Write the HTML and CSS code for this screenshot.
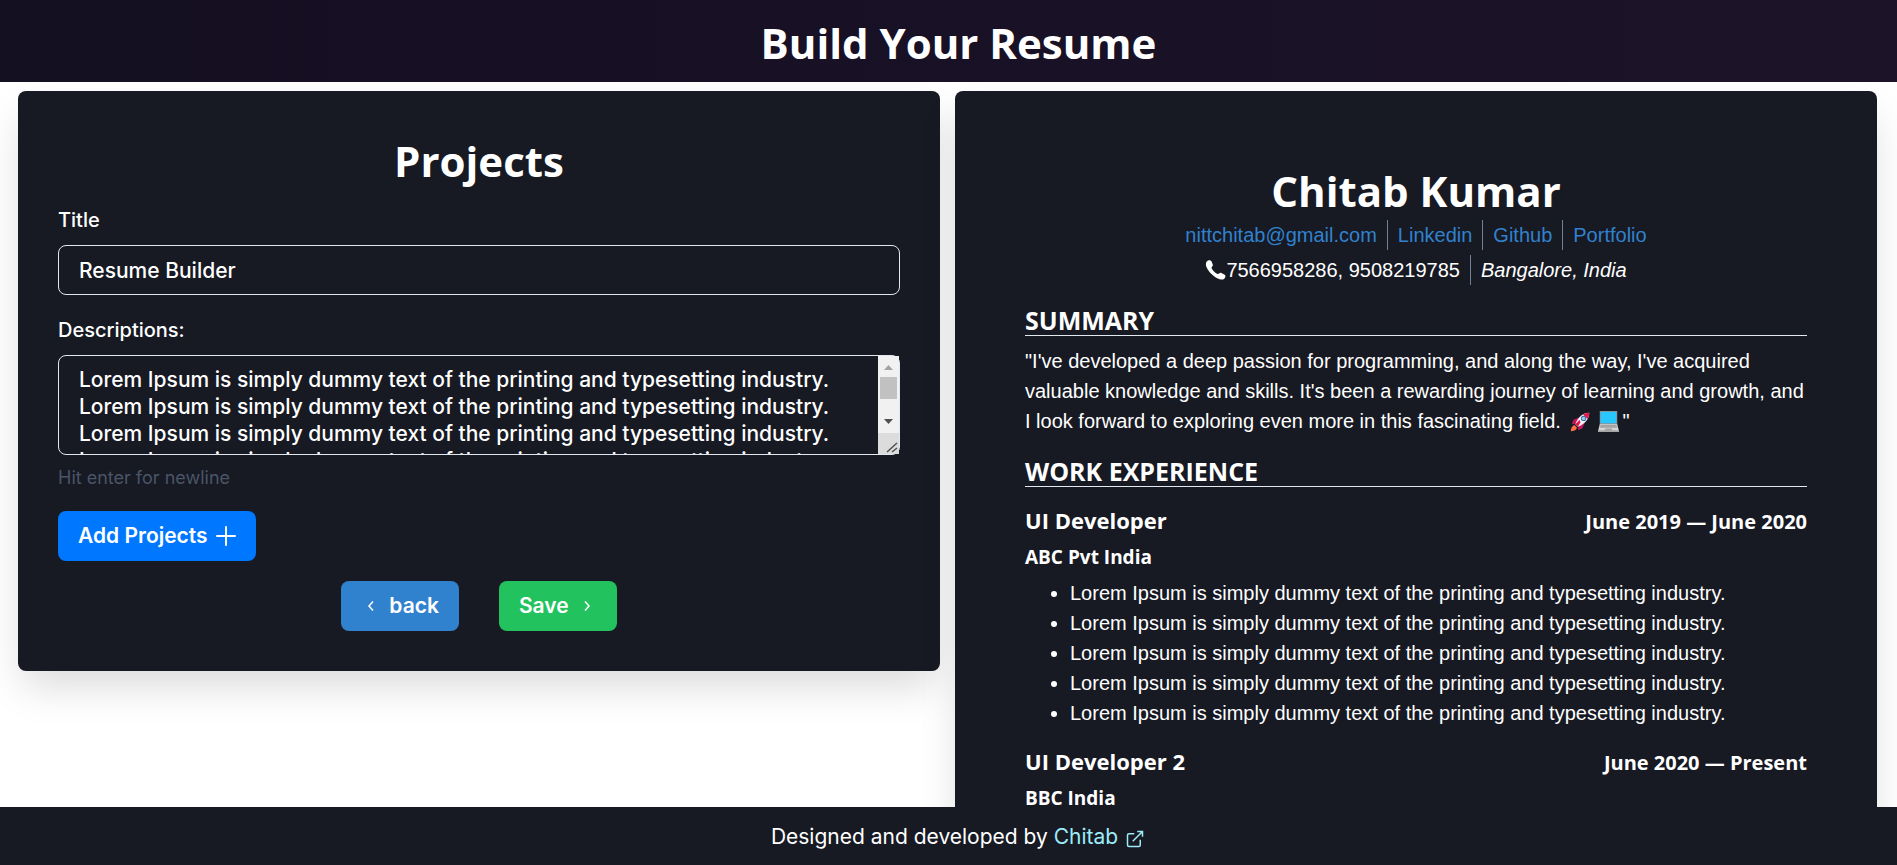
FILE: index.html
```html
<!DOCTYPE html>
<html lang="en">
<head>
<meta charset="utf-8">
<title>Build Your Resume</title>
<link rel="stylesheet" href="styles.css">
</head>
<body>
<header class="site-header"><h1 class="heading">Build Your Resume</h1></header>
<main class="workspace">
  <form class="card editor">
    <h2 class="heading">Projects</h2>
    <label class="label" for="title">Title</label>
    <input class="field" id="title" type="text" value="Resume Builder">
    <label class="label label-next" for="descriptions">Descriptions:</label>
    <div class="area-box">
      <textarea class="area" id="descriptions">Lorem Ipsum is simply dummy text of the printing and typesetting industry.
Lorem Ipsum is simply dummy text of the printing and typesetting industry.
Lorem Ipsum is simply dummy text of the printing and typesetting industry.
Lorem Ipsum is simply dummy text of the printing and typesetting industry.
Lorem Ipsum is simply dummy text of the printing and typesetting industry.</textarea>
      <svg class="scrollbar" viewBox="0 0 21 98" aria-hidden="true"><path fill="#f1f1f1" d="M0 0h21v77H0z"/><path fill="#dcdcdc" d="M0 77h21v21H0z"/><path fill="#c1c1c1" d="M2 21h17v22H2z"/><path fill="#a3a3a3" d="m6 14 4.500-5 4.500 5z"/><path fill="#505050" d="M6 63h9l-4.500 5z"/><path stroke="#505050" stroke-width="1.500" d="m9 96 10-9M14 96l5-4"/></svg>
    </div>
    <p class="hint">Hit enter for newline</p>
    <button class="btn btn-add" type="button">Add Projects
      <svg class="icon-plus" viewBox="0 0 20 20" aria-hidden="true"><path d="M10 1v18M1 10h18"/></svg>
    </button>
    <div class="actions">
      <button class="btn btn-back" type="button"><svg class="icon-chevron" viewBox="0 0 20 20" aria-hidden="true"><path d="M12 5.500L8 10l4 4.500"/></svg>back</button>
      <button class="btn btn-save" type="submit">Save<svg class="icon-chevron" viewBox="0 0 20 20" aria-hidden="true"><path d="M8 5.500L12 10l-4 4.500"/></svg></button>
    </div>
  </form>
  <article class="card resume">
    <h2 class="heading">Chitab Kumar</h2>
    <div class="contact">
      <a href="mailto:nittchitab@gmail.com">nittchitab@gmail.com</a>
      <a href="#linkedin">Linkedin</a>
      <a href="#github">Github</a>
      <a href="#portfolio">Portfolio</a>
    </div>
    <div class="contact">
      <span class="phone"><svg class="icon-phone" viewBox="0 0 20 20" aria-hidden="true"><path d="M1.200 1.500C2.500.200 4.800-.300 5.800 1l1.500 3.500c.5 1.200-1.300 2.300-1.300 3.200 0 1.500 4.700 6.300 6.300 6.300 1 0 2-1.700 3.200-1.200l3.700 1.900c1.400.9.600 3.200-.8 4.400C13.500 22.500-3.500 8 1.200 1.500Z"/></svg>7566958286, 9508219785</span>
      <em>Bangalore, India</em>
    </div>
    <section>
      <h3 class="section-title">SUMMARY</h3>
      <p class="summary">"I've developed a deep passion for programming, and along the way, I've acquired valuable knowledge and skills. It's been a rewarding journey of learning and growth, and I look forward to exploring even more in this fascinating field. <svg class="emoji" viewBox="0 0 24 24" role="img" aria-label="rocket"><path fill="#c2185b" d="M11 7 4 10l-2 5 6-1zM17 13l-3 7-5 2 1-6z"/><path fill="#f4f4f8" d="M22 2C15 2 9 7 6 15l3 3c8-3 13-9 13-16Z"/><path fill="#e8174f" d="M22 2c-2 0-5 .5-7 2l5 5c1.500-2 2-5 2-7ZM6 15l5-5 1 3-3 5z"/><circle cx="15.500" cy="8.500" r="3" fill="#38699a"/><circle cx="15.500" cy="8.500" r="2" fill="#8bd0f3"/><path fill="#ff7043" d="M5 16c-3 1-4 4-4 7 3 0 6-1 7-4z"/></svg><svg class="emoji" viewBox="0 0 24 24" role="img" aria-label="laptop"><path fill="#8b9094" d="M2 0h20v16H2z"/><path fill="#28c8ff" d="M3 1h18v13H3z"/><path fill="#d5d5d5" d="M2 15h20l2 8H0z"/><path fill="#a4a4a4" d="M3 16h18l1 3H2zM8 20h8v2H8zM0 22h24v2H0z"/></svg>"</p>
    </section>
    <section>
      <h3 class="section-title">WORK EXPERIENCE</h3>
      <div class="job">
        <div class="job-head"><h4>UI Developer</h4><span class="dates">June 2019 — June 2020</span></div>
        <h5>ABC Pvt India</h5>
        <ul>
          <li>Lorem Ipsum is simply dummy text of the printing and typesetting industry.</li>
          <li>Lorem Ipsum is simply dummy text of the printing and typesetting industry.</li>
          <li>Lorem Ipsum is simply dummy text of the printing and typesetting industry.</li>
          <li>Lorem Ipsum is simply dummy text of the printing and typesetting industry.</li>
          <li>Lorem Ipsum is simply dummy text of the printing and typesetting industry.</li>
        </ul>
      </div>
      <div class="job">
        <div class="job-head"><h4>UI Developer 2</h4><span class="dates">June 2020 — Present</span></div>
        <h5>BBC India</h5>
      </div>
    </section>
  </article>
</main>
<footer class="site-footer">
  <p>Designed and developed by <a href="#chitab">Chitab <svg class="icon-external" viewBox="0 0 24 24" aria-hidden="true"><path d="M11 5H4a2 2 0 0 0-2 2v13a2 2 0 0 0 2 2h13a2 2 0 0 0 2-2v-7M15 2h7v7M22 2 9 15"/></svg></a></p>
</footer>
</body>
</html>
```

FILE: styles.css
```css
* { box-sizing: border-box; }

body {
  display: flex;
  flex-direction: column;
  height: 100vh;
  margin: 0;
  background: #fff;
  color: #fff;
  font: 20px/30px "Liberation Sans", Arial, sans-serif;
}

h1, h2, h3, h4, h5, p, ul { margin: 0; }

.heading {
  font: 700 42px/54px "Open Sans", "Noto Sans", sans-serif;
  text-align: center;
}

.site-header {
  padding: 16px 0 12px;
  background: linear-gradient(90deg, #150f22, #1c1328);
}

.site-header .heading { padding-left: 20px; }

.workspace {
  display: grid;
  flex: 1;
  grid-template-columns: 1fr 1fr;
  gap: 15px;
  align-items: start;
  min-height: 0;
  padding: 9px 20px 0 18px;
  overflow-y: auto;
  scrollbar-width: none;
}

.card {
  border-radius: 8px;
  background: #171923;
  box-shadow: 0 20px 40px -5px rgba(0, 0, 0, 0.15);
}

.editor {
  padding: 43px 40px 40px;
  font-family: Inter, sans-serif;
}

.label {
  display: block;
  margin: 17px 0 10px;
  font-weight: 500;
}

.label-next { margin-top: 20px; }

.field,
.area-box {
  display: flex;
  width: 100%;
  height: 50px;
  padding: 0 20px;
  border: 1px solid #e2e8f0;
  border-radius: 8px;
  background: transparent;
  color: #fff;
  font: 500 21px/27px Inter, sans-serif;
}

.area-box {
  height: 100px;
  padding: 0;
}

.area {
  flex: 1;
  min-width: 0;
  margin: 0;
  padding: 10px 0 0 20px;
  border: 0;
  background: transparent;
  color: inherit;
  font: inherit;
  overflow-y: scroll;
  scrollbar-width: none;
  resize: none;
}

.hint {
  margin: 8px 0 18px;
  color: #4a5568;
  font-size: 18px;
}

.btn {
  display: inline-flex;
  align-items: center;
  gap: 8px;
  height: 50px;
  padding: 0 20px;
  border: 0;
  border-radius: 8px;
  color: #fff;
  font: 600 21px/30px Inter, sans-serif;
}

.btn-add { background: #07f; }
.btn-back { background: #3182ce; }
.btn-save { background: #22c35e; }

.actions {
  display: flex;
  justify-content: center;
  gap: 40px;
  margin-top: 20px;
}

svg { fill: none; stroke: currentColor; }
.scrollbar { width: 21px; height: 98px; stroke: none; }
.icon-plus { width: 20px; height: 20px; stroke-width: 2; stroke-linecap: round; }
.icon-chevron { width: 20px; height: 20px; stroke-width: 1.500; }
.icon-phone { width: 21px; height: 20px; fill: #fff; stroke: none; }
.icon-external { width: 18px; height: 18px; margin-left: 2px; stroke-width: 2; vertical-align: -4px; }

.resume { padding: 73px 70px 40px; }
.resume .heading { margin-bottom: 2px; }

.contact {
  display: flex;
  justify-content: center;
  margin-bottom: 5px;
}

.contact > * { padding: 0 10px; }
.contact > * + * { border-left: 1px solid #718096; }
.contact a { color: #3182ce; text-decoration: none; }
.phone { display: flex; align-items: center; }

.section-title {
  margin: 20px 0 10px;
  border-bottom: 1px solid #e2e8f0;
  font: 700 25px/30px "Open Sans", "Noto Sans", sans-serif;
}

.emoji { width: 21px; height: 21px; margin: 0 3px 0 4px; stroke: none; vertical-align: -4px; }

.job { padding-top: 8px; margin-bottom: 10px; }
.job-head { display: flex; justify-content: space-between; align-items: baseline; }
h4, h5, .dates { font-family: "Open Sans", "Noto Sans", sans-serif; font-weight: 700; }
h4 { font-size: 22px; line-height: 30px; }
h5 { margin-top: 5px; font-size: 19px; line-height: 30px; }
.dates { font-size: 20px; }
.job ul { margin-top: 6px; padding-left: 45px; }

.site-footer {
  padding: 15px 0 13px 18px;
  background: #171923;
  font-family: Inter, sans-serif;
  font-size: 21px;
  text-align: center;
}

.site-footer a { color: #9decf9; text-decoration: none; }
```
